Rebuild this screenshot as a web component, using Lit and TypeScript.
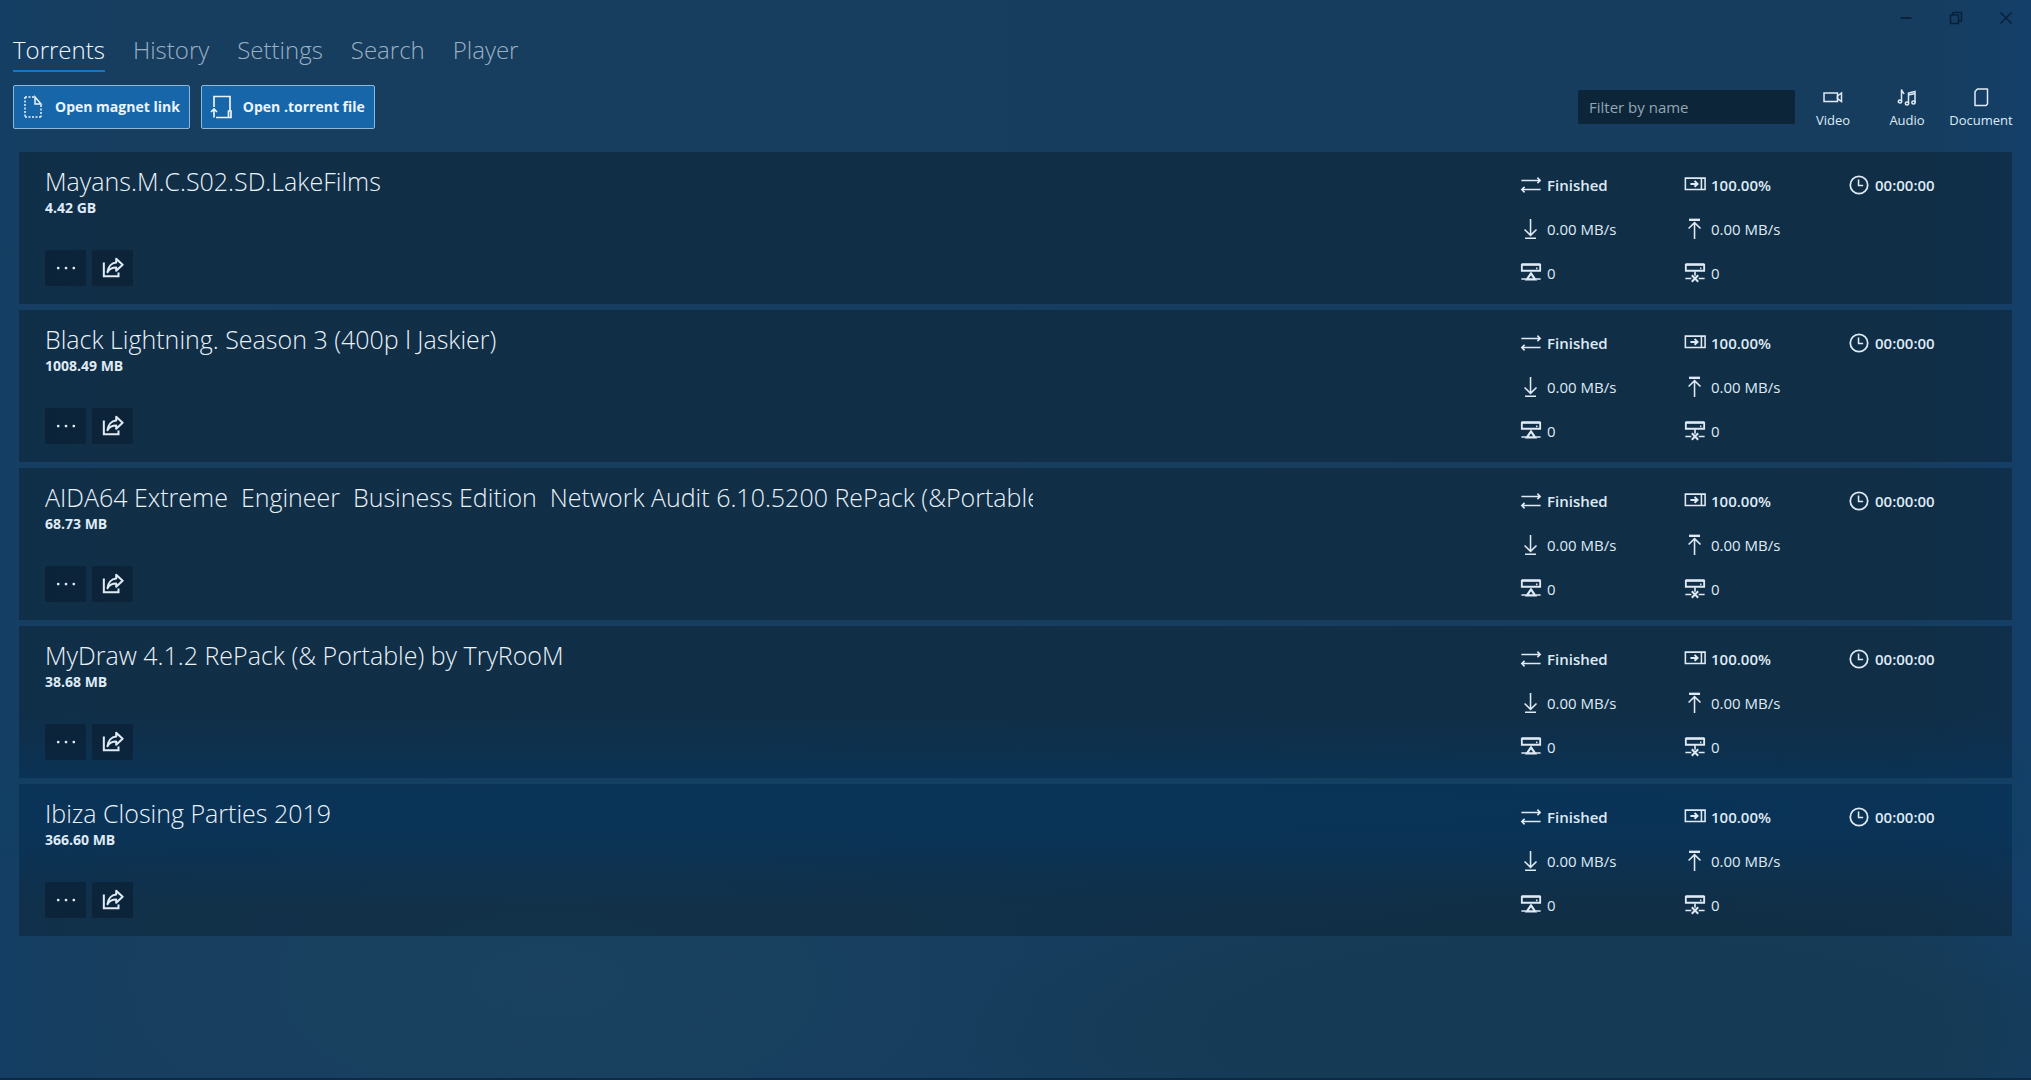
import { LitElement, html, css, svg } from "lit";
import { customElement, property, state } from "lit/decorators.js";
import { classMap } from "lit/directives/class-map.js";

interface Torrent {
  name: string;
  size: string;
  status: string;
  progress: string;
  time: string;
  down: string;
  up: string;
  seeds: number;
  peers: number;
}

const make = (name: string, size: string): Torrent => ({
  name,
  size,
  status: "Finished",
  progress: "100.00%",
  time: "00:00:00",
  down: "0.00 MB/s",
  up: "0.00 MB/s",
  seeds: 0,
  peers: 0,
});

const TORRENTS: Torrent[] = [
  make("Mayans.M.C.S02.SD.LakeFilms", "4.42 GB"),
  make("Black Lightning. Season 3 (400p l Jaskier)", "1008.49 MB"),
  make("AIDA64 Extreme  Engineer  Business Edition  Network Audit 6.10.5200 RePack (&Portable)", "68.73 MB"),
  make("MyDraw 4.1.2 RePack (& Portable) by TryRooM", "38.68 MB"),
  make("Ibiza Closing Parties 2019", "366.60 MB"),
];

const GLYPHS: Record<string, unknown> = {
  magnet: svg`
    <path d="M4 2V22" stroke-dasharray="2 1.5"/>
    <path d="M4 2H14" stroke-dasharray="2 1.5"/>
    <path d="M4 22H20" stroke-dasharray="2 1.5"/>
    <path d="M20 10V22" stroke-dasharray="2 1.5"/>
    <path d="M14 2V9H20Z"/>`,
  file: svg`
    <path d="M5 12V1.500H21V16" stroke-width="1.700"/>
    <path d="M7 22.500H19.500V16H22V22.500H19" stroke-width="1.700"/>
    <path d="M5 22.500V14M2 17L5 14L8 17" stroke-width="1.700"/>`,
  transfer: svg`
    <path d="M1.500 7H22M19 4L22 7L19 10" stroke-width="1.700"/>
    <path d="M22.500 17H2M5 14L2 17L5 20" stroke-width="1.700"/>`,
  progress: svg`
    <path d="M1.500 4.500H23V17H1.500ZM19 4.500V17" stroke-width="1.700"/>
    <path d="M7 10.800H14.500M11.500 7.500L14.800 10.800L11.500 14" stroke-width="2.200"/>`,
  clock: svg`
    <circle cx="12" cy="12" r="9.500" stroke-width="1.900"/>
    <path d="M11.500 6V12.500H16.500" stroke-width="1.700"/>`,
  down: svg`
    <path d="M11.500 1V19M5 12.500L11.500 19L18 12.500M5.500 22H17.500" stroke-width="1.700"/>`,
  up: svg`
    <path d="M11.500 23V5M5 11.500L11.500 5L18 11.500" stroke-width="1.700"/>
    <path d="M5.500 2H17.500" stroke-width="2.600"/>`,
  seeds: svg`
    <path d="M2 3H22V9.500H2Z" stroke-width="2"/>
    <path d="M2 2.500H22" stroke-width="2.200"/>
    <path d="M17.500 7H19M1.500 18.500H7M17 18.500H22.500" stroke-width="1.800"/>
    <path d="M12 12.500L16.500 19H7.500Z" stroke-width="2.400"/>`,
  peers: svg`
    <path d="M2 3H22V9.500H2Z" stroke-width="2"/>
    <path d="M2 2.500H22" stroke-width="2.200"/>
    <path d="M17.500 7H19M1.500 18H8M16 18H22.500M12 10V15" stroke-width="1.800"/>
    <path d="M8.500 14.500L15.500 21.500M15.500 14.500L8.500 21.500" stroke-width="2.200"/>`,
  more: svg`
    <g fill="currentColor" stroke="none"><circle cx="3.500" cy="12" r="1.500"/><circle cx="12" cy="12" r="1.500"/><circle cx="20.500" cy="12" r="1.500"/></g>`,
  share: svg`
    <path d="M2 6V21H18V17" stroke-width="2.200"/>
    <path d="M15.500 2L22.500 8.500L15.500 15V11.500C11 11.500 8 13 6 16.500C6.500 11 10 6.500 15.500 6Z" stroke-width="2.200" stroke-linejoin="round"/>`,
  video: svg`
    <path d="M3 8H16.500V16.500H3Z"/>
    <path d="M16.500 11L20.500 8V16.500L16.500 13.500Z"/>`,
  audio: svg`
    <path d="M6.500 16.500V4.500C7 7 8.500 7.500 9 9"/>
    <ellipse cx="5" cy="16.500" rx="1.700" ry="1.500"/>
    <path d="M13.500 18.500V8L20 6.500V17.500M13.500 10L20 8.500"/>
    <ellipse cx="12" cy="18.500" rx="1.700" ry="1.500"/>
    <ellipse cx="18.500" cy="17.500" rx="1.700" ry="1.500"/>`,
  document: svg`
    <path d="M8.500 4H18.500V19L17 20.500H6V6.500Z" stroke-linejoin="round"/>`,
  minimize: svg`<path d="M6.500 12H17.500" stroke-width="1.800"/>`,
  restore: svg`<path d="M6.500 9H14.500V17.500H6.500ZM9 9V6.500H17.500V15H14.500"/>`,
  close: svg`<path d="M6.500 6.500L17.500 17.500M17.500 6.500L6.500 17.500"/>`,
};

@customElement("ui-icon")
export class UiIcon extends LitElement {
  @property() name = "";

  static styles = css`
    :host {
      display: block;
      flex: none;
      width: 24px;
      height: 24px;
    }
    svg {
      display: block;
      width: 100%;
      height: 100%;
      fill: none;
      stroke: currentColor;
      stroke-width: 1.5;
    }
  `;

  render() {
    return html`<svg viewBox="0 0 24 24" aria-hidden="true">${GLYPHS[this.name]}</svg>`;
  }
}

@customElement("torrent-card")
export class TorrentCard extends LitElement {
  @property({ attribute: false }) torrent!: Torrent;

  static styles = css`
    :host {
      display: block;
    }
    .card {
      box-sizing: border-box;
      display: grid;
      grid-template-columns: 67fr 33fr 492px;
      min-height: 152px;
      padding: 11px 0 9px 26px;
      background: linear-gradient(
          180deg,
          rgba(10, 31, 46, 0.5) 66%,
          rgba(4, 44, 80, 0.62) 73%,
          rgba(4, 44, 80, 0.62) 77%,
          rgba(10, 31, 46, 0.45) 84%
        )
        fixed;
    }
    .info {
      display: flex;
      flex-direction: column;
      min-width: 0;
      padding-bottom: 9px;
    }
    .name {
      margin: 0;
      overflow: hidden;
      white-space: pre;
      color: #eaf2fa;
      font-size: 25px;
      font-weight: 300;
      line-height: 36px;
    }
    .size {
      margin: 0;
      font-size: 14px;
      font-weight: 700;
      line-height: 18px;
    }
    .actions {
      display: flex;
      gap: 6px;
      margin-top: auto;
    }
    .action {
      display: grid;
      place-items: center;
      width: 41px;
      height: 36px;
      padding: 0;
      border: 0;
      border-radius: 2px;
      background: rgba(9, 27, 46, 0.55);
      color: inherit;
    }
    .stats {
      grid-column: 3;
      display: grid;
      grid-template-columns: repeat(3, 164px);
      grid-auto-rows: 44px;
      margin: 0;
    }
    .stat {
      display: flex;
      align-items: center;
      gap: 5px;
      font-size: 15px;
      line-height: 20px;
    }
    .strong {
      font-weight: 600;
    }
    .row-start {
      grid-column: 1;
    }
    .glyph {
      width: 22px;
      height: 22px;
    }
  `;

  private stat(icon: string, label: string, value: string | number, strong = false, first = false) {
    return html`<div
      class=${classMap({ stat: true, strong, "row-start": first })}
      title=${label}
    >
      <ui-icon class="glyph" name=${icon}></ui-icon><span>${value}</span>
    </div>`;
  }

  render() {
    const t = this.torrent;
    return html`
      <article class="card">
        <div class="info">
          <h2 class="name">${t.name}</h2>
          <p class="size">${t.size}</p>
          <div class="actions">
            <button class="action" aria-label="More"><ui-icon class="glyph" name="more"></ui-icon></button>
            <button class="action" aria-label="Share"><ui-icon class="glyph" name="share"></ui-icon></button>
          </div>
        </div>
        <div class="stats">
          ${this.stat("transfer", "Status", t.status, true, true)}
          ${this.stat("progress", "Progress", t.progress, true)}
          ${this.stat("clock", "Time left", t.time, true)}
          ${this.stat("down", "Download", t.down, false, true)}
          ${this.stat("up", "Upload", t.up)}
          ${this.stat("seeds", "Seeds", t.seeds, false, true)}
          ${this.stat("peers", "Peers", t.peers)}
        </div>
      </article>
    `;
  }
}

@customElement("app-root")
export class AppRoot extends LitElement {
  @state() private tab = "Torrents";

  static styles = css`
    :host {
      display: block;
      font-family: "Open Sans", "Noto Sans", sans-serif;
      color: #dfeaf5;
    }
    .window {
      box-sizing: border-box;
      display: flex;
      flex-direction: column;
      min-height: 100vh;
      border-bottom: 2px solid #0c2a44;
      background:
        radial-gradient(ellipse 32% 16% at 78% 96%, rgba(21, 58, 84, 0.9) 55%, transparent),
        radial-gradient(ellipse 90% 7% at 50% 75%, rgba(12, 66, 102, 0.6), transparent),
        radial-gradient(ellipse 24% 22% at 27% 91%, rgba(27, 68, 96, 0.6), transparent),
        linear-gradient(90deg, #143e63 0, #173e5f 6%, #163d5e 94%, #143f68 100%);
    }
    .titlebar {
      display: flex;
      justify-content: flex-end;
      height: 32px;
      color: #08213a;
    }
    .caption {
      display: grid;
      place-items: center;
      width: 50px;
      height: 35px;
      padding: 0;
      border: 0;
      background: none;
      color: inherit;
    }
    .tabs {
      display: flex;
      gap: 28px;
      padding: 0 13px;
    }
    .tab {
      height: 40px;
      padding: 0 0 2px;
      border: 0;
      border-bottom: 2px solid transparent;
      background: none;
      color: #9ab0c4;
      font: 300 24px/36px "Open Sans", "Noto Sans", sans-serif;
    }
    .active {
      border-bottom-color: #1577c8;
      color: #f2f8fd;
    }
    .toolbar {
      display: flex;
      align-items: center;
      gap: 11px;
      margin-top: 13px;
      padding: 0 13px;
    }
    .open {
      box-sizing: border-box;
      display: flex;
      align-items: center;
      gap: 10px;
      height: 44px;
      padding: 0 9px 0 7px;
      border: 1px solid #8db8dd;
      border-radius: 2px;
      background: #1766aa;
      color: #eaf4fc;
      font: 700 14px/20px "Open Sans", "Noto Sans", sans-serif;
    }
    .filter {
      box-sizing: border-box;
      width: 217px;
      height: 34px;
      margin-left: auto;
      padding: 0 11px;
      border: 0;
      border-radius: 2px;
      background: #0d2539;
      color: inherit;
      font: 400 15px/20px "Open Sans", "Noto Sans", sans-serif;
    }
    .filter::placeholder {
      color: #93a5b4;
      opacity: 1;
    }
    .kinds {
      display: grid;
      grid-template-columns: repeat(3, 74px);
      margin-left: -10px;
    }
    .kind {
      display: flex;
      flex-direction: column;
      align-items: center;
      gap: 2px;
      padding: 0;
      border: 0;
      background: none;
      color: inherit;
      font: 400 13px/18px "Open Sans", "Noto Sans", sans-serif;
    }
    .list {
      display: grid;
      gap: 6px;
      padding: 23px 19px 0;
    }
  `;

  render() {
    return html`
      <div class="window">
        <div class="titlebar">
          <button class="caption" aria-label="Minimize"><ui-icon name="minimize"></ui-icon></button>
          <button class="caption" aria-label="Restore"><ui-icon name="restore"></ui-icon></button>
          <button class="caption" aria-label="Close"><ui-icon name="close"></ui-icon></button>
        </div>
        <nav class="tabs">
          ${["Torrents", "History", "Settings", "Search", "Player"].map(
            (name) => html`<button
              class=${classMap({ tab: true, active: name === this.tab })}
              @click=${() => (this.tab = name)}
            >${name}</button>`
          )}
        </nav>
        <div class="toolbar">
          <button class="open"><ui-icon name="magnet"></ui-icon>Open magnet link</button>
          <button class="open"><ui-icon name="file"></ui-icon>Open .torrent file</button>
          <input class="filter" type="text" placeholder="Filter by name" aria-label="Filter by name" />
          <div class="kinds">
            <button class="kind"><ui-icon name="video"></ui-icon>Video</button>
            <button class="kind"><ui-icon name="audio"></ui-icon>Audio</button>
            <button class="kind"><ui-icon name="document"></ui-icon>Document</button>
          </div>
        </div>
        <main class="list">
          ${TORRENTS.map((t) => html`<torrent-card .torrent=${t}></torrent-card>`)}
        </main>
      </div>
    `;
  }
}
